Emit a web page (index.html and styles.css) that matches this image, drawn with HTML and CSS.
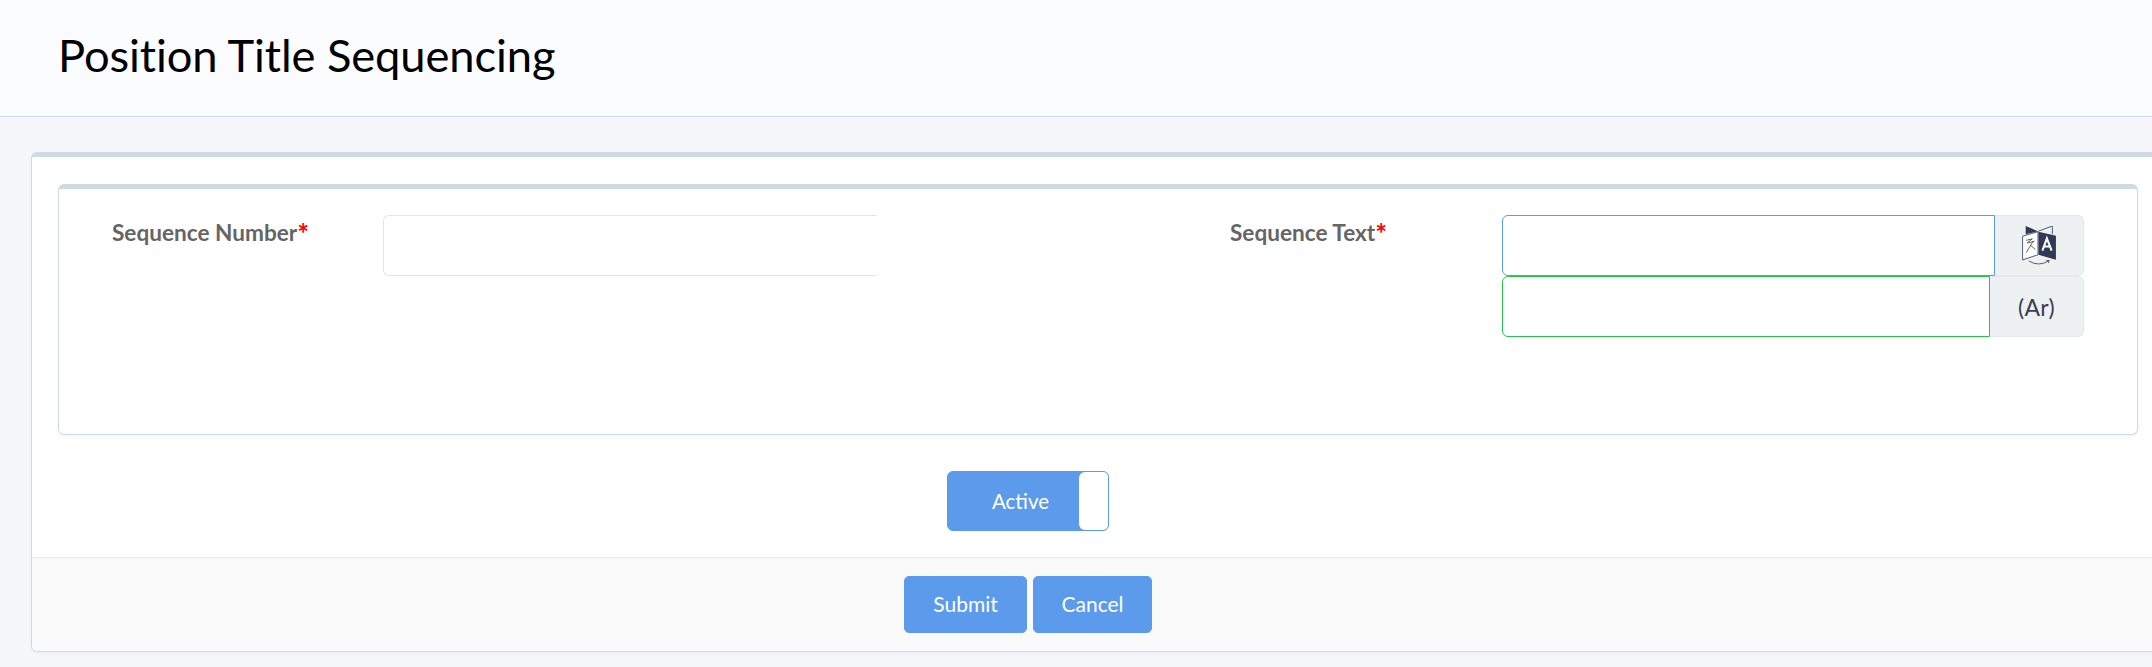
FILE: index.html
```html
<!DOCTYPE html>
<html lang="en">
<head>
<meta charset="utf-8">
<title>Position Title Sequencing</title>
<link rel="stylesheet" href="styles.css">
</head>
<body>
<header class="page-head"><h1 class="page-title">Position Title Sequencing</h1></header>
<main class="page-body">
  <section class="card">
    <div class="card-body">
      <div class="panel">
        <div class="field field-number">
          <label class="label">Sequence Number<span class="req">*</span></label>
          <div class="input input-open"></div>
        </div>
        <div class="field field-text">
          <label class="label">Sequence Text<span class="req">*</span></label>
          <div class="stack">
            <div class="group">
              <div class="input input-blue"></div>
              <span class="addon addon-icon">
                <svg class="trans" viewBox="0 0 33 38" width="34" height="39" aria-hidden="true">
                  <path d="M3.5 0 L15.5 5 L3.5 8 Z" fill="#2f3a55"/>
                  <path d="M16 5 L29.5 0 V8" fill="none" stroke="#2f3a55" stroke-width=".8"/>
                  <path d="M.5 10 L15.5 5.5 V28 L.5 33 Z" fill="#fff" stroke="#2f3a55" stroke-width=".8"/>
                  <path d="M16 5.5 L33 9.5 V33 L16 28 Z" fill="#2f3a55"/>
                  <path d="M19.8 24 L24.2 12 L28.8 24 M21.3 20 H27.2" fill="none" stroke="#fff" stroke-width="2"/>
                  <path d="M4 14 L10 12.5 L5 16.5 L12 15 M11 14.5 L4 26 M8.5 19 L13 23" fill="none" stroke="#555" stroke-width=".9"/>
                  <path d="M6.5 34 Q16 40 26 34 M23.5 33.8 L26.5 33.6 L25.6 36" fill="none" stroke="#555" stroke-width=".9"/>
                </svg>
              </span>
            </div>
            <div class="group">
              <div class="input input-green"></div>
              <span class="addon addon-text">(Ar)</span>
            </div>
          </div>
        </div>
      </div>
      <div class="toggle-row">
        <div class="toggle"><span class="toggle-on">Active</span><span class="toggle-knob"></span></div>
      </div>
    </div>
    <footer class="card-foot">
      <div class="actions">
        <button class="btn btn-submit" type="button">Submit</button>
        <button class="btn btn-cancel" type="button">Cancel</button>
      </div>
    </footer>
  </section>
</main>
</body>
</html>
```
FILE: styles.css
```css
* { box-sizing: border-box; }
html, body { margin: 0; height: 100%; }
body {
  background: #f5f7fb;
  font-family: Lato, "Liberation Sans", sans-serif;
  overflow: hidden;
}
.page-head {
  height: 117px;
  background: #fbfcfe;
  border-bottom: 1px solid #cfdbe2;
  padding: 29px 0 0 58px;
}
.page-title {
  margin: 0;
  font-size: 45.3px;
  line-height: 52px;
  font-weight: 400;
  color: #000;
  letter-spacing: -.1px;
}
.page-body { padding: 35px 0 0 31px; }
.card {
  width: 2134px;
  background: #fff;
  border: 1px solid #cfdbe2;
  border-top: 5px solid #cfdbe2;
  border-radius: 6px;
  box-shadow: 0 2px 4px rgba(0,0,0,.04);
}
.card-body { padding: 27px 0 0 26px; }
.panel {
  width: 2080px;
  height: 251px;
  display: flex;
  border: 1px solid #cbdae4;
  border-top: 5px solid #cfdbe2;
  border-radius: 6px;
  padding: 26px 0 0 53px;
  box-shadow: 0 2px 4px rgba(0,0,0,.04);
}
.field { display: flex; align-items: flex-start; }
.field-number { width: 1118px; }
.field-text { width: 854px; }
.label {
  display: block;
  width: 271px;
  padding-top: 5px;
  font-size: 22.6px;
  line-height: 26px;
  font-weight: 700;
  color: #656565;
}
.field-text .label { width: 272px; }
.req { color: #f00; font-size: 28px; line-height: 20px; vertical-align: -3px; }
.input { height: 61px; background: #fff; }
.input-open {
  width: 494px;
  border: 1px solid #dfe7e7;
  border-right: 0;
  border-radius: 6px 0 0 6px;
}
.stack { width: 582px; }
.group { display: flex; height: 61px; }
.input-blue {
  flex: 0 0 493px;
  border: 1px solid #5c9bec;
  border-radius: 6px 0 0 6px;
}
.input-green {
  flex: 0 0 488px;
  border: 1px solid #27c24c;
  border-radius: 6px 0 0 6px;
}
.addon {
  flex: 1;
  display: flex;
  align-items: center;
  justify-content: center;
  background: #edf1f2;
  border: 1px solid #e4eaec;
  border-left: 0;
  border-radius: 0 6px 6px 0;
  color: #3a3f51;
}
.addon-text { font-size: 23px; letter-spacing: .3px; }
.trans { display: block; }
.toggle-row {
  width: 1992px;
  margin-left: -26px;
  padding-top: 36px;
  height: 122px;
  display: flex;
  justify-content: center;
}
.toggle {
  width: 162px;
  height: 60px;
  display: flex;
  background: #5c9bec;
  border: 1px solid #5c9bec;
  border-radius: 6px;
  overflow: hidden;
}
.toggle-on {
  flex: 1;
  display: flex;
  align-items: center;
  justify-content: center;
  padding-left: 14px;
  color: #fff;
  font-size: 20.5px;
}
.toggle-knob {
  width: 29px;
  background: #fff;
  border-radius: 6px 0 0 6px;
}
.card-foot {
  height: 94px;
  background: #fafafa;
  border-top: 1px solid #e8eaec;
  border-radius: 0 0 6px 6px;
}
.actions {
  width: 1994px;
  margin-left: -1px;
  padding-top: 18px;
  display: flex;
  justify-content: center;
  gap: 6px;
}
.btn {
  height: 57px;
  padding: 0 0 2px;
  background: #5c9bec;
  border: 1px solid #5c9bec;
  border-radius: 5px;
  color: #fff;
  font-family: inherit;
  font-size: 21px;
}
.btn-submit { width: 123px; }
.btn-cancel { width: 119px; }
```
